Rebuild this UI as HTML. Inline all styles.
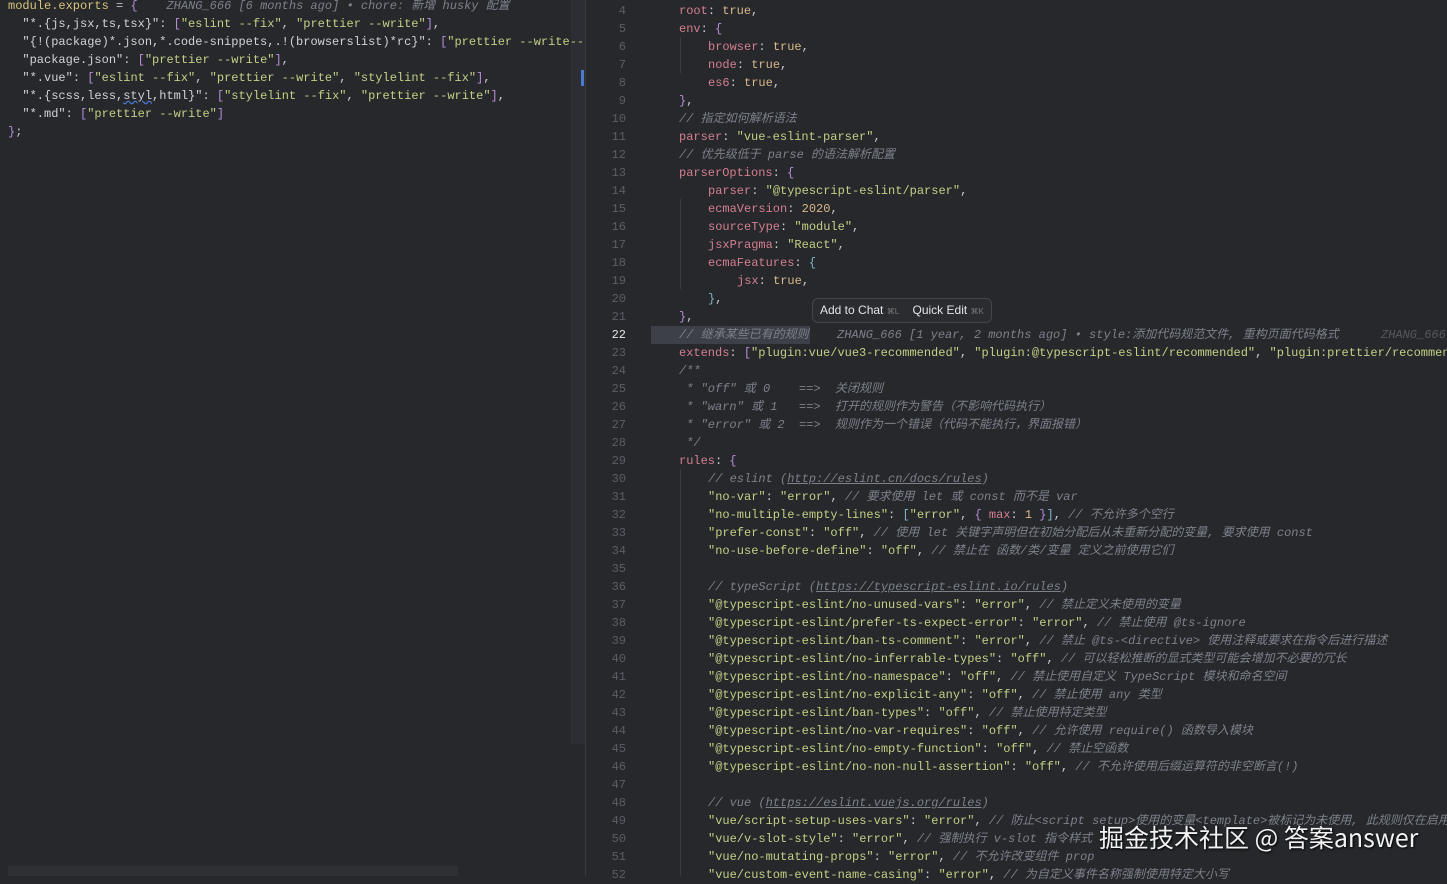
<!DOCTYPE html>
<html><head><meta charset="utf-8"><style>
*{margin:0;padding:0;box-sizing:border-box}
body{width:1447px;height:876px;overflow:hidden;background:#26282c;font-family:"Liberation Mono","Noto Sans CJK SC",monospace;font-size:12px;color:#c9ccd2;position:relative}
.l{position:absolute;white-space:pre;line-height:18px;height:18px}
.k{color:#d47f8f}.s{color:#c5cf85}.c{color:#7d818a;font-style:italic}.n{color:#d9b98a}.p{color:#bfc3ca}.b{color:#b68ed8}.y{color:#d7c37a}.w{color:#d0d3d8}.cy{color:#7fb6c4}
.num{position:absolute;left:590px;width:36px;text-align:right;color:#5b5e65;line-height:18px;font-size:12px}
.u{text-decoration:underline}
</style></head><body>
<div style="position:absolute;left:571px;top:0;width:14px;height:744px;background:#2c2e33"></div>
<div style="position:absolute;left:581px;top:70px;width:3px;height:16px;background:#4a7bd0"></div>
<div style="position:absolute;left:585px;top:0;width:1px;height:876px;background:#3a3c41"></div>
<div style="position:absolute;left:8px;top:866px;width:450px;height:10px;background:#2e3035"></div>
<div class="l" style="left:8px;top:-3px"><span class="y">module.exports</span> <span class="p">=</span> <span class="b">{</span>    <span class="c">ZHANG_666 [6 months ago] • chore: 新增 husky 配置</span></div>
<div class="l" style="left:8px;top:15px">  <span class="w">"*.{js,jsx,ts,tsx}"</span>: <span class="b">[</span><span class="s">"eslint --fix"</span>, <span class="s">"prettier --write"</span><span class="b">]</span>,</div>
<div class="l" style="left:8px;top:33px">  <span class="w">"{!(package)*.json,*.code-snippets,.!(browserslist)*rc}"</span>: <span class="b">[</span><span class="s">"prettier --write--</span></div>
<div class="l" style="left:8px;top:51px">  <span class="w">"package.json"</span>: <span class="b">[</span><span class="s">"prettier --write"</span><span class="b">]</span>,</div>
<div class="l" style="left:8px;top:69px">  <span class="w">"*.vue"</span>: <span class="b">[</span><span class="s">"eslint --fix"</span>, <span class="s">"prettier --write"</span>, <span class="s">"stylelint --fix"</span><span class="b">]</span>,</div>
<div class="l" style="left:8px;top:87px">  <span class="w">"*.{scss,less,<span style="text-decoration:underline wavy #4a7bd0">styl</span>,html}"</span>: <span class="b">[</span><span class="s">"stylelint --fix"</span>, <span class="s">"prettier --write"</span><span class="b">]</span>,</div>
<div class="l" style="left:8px;top:105px">  <span class="w">"*.md"</span>: <span class="b">[</span><span class="s">"prettier --write"</span><span class="b">]</span></div>
<div class="l" style="left:8px;top:123px"><span class="b">}</span>;</div>

<div style="position:absolute;left:651px;top:326px;width:159px;height:18px;background:#3d4048"></div>
<div style="position:absolute;left:680px;top:37px;width:1px;height:36px;background:#3a3c42"></div>
<div style="position:absolute;left:680px;top:469px;width:1px;height:407px;background:#3a3c42"></div>
<div style="position:absolute;left:680px;top:199px;width:1px;height:90px;background:#3a3c42"></div>

<div class="num" style="top:2px">4<br>5<br>6<br>7<br>8<br>9<br>10<br>11<br>12<br>13<br>14<br>15<br>16<br>17<br>18<br>19<br>20<br>21<br><span style="color:#e6e6e6">22</span><br>23<br>24<br>25<br>26<br>27<br>28<br>29<br>30<br>31<br>32<br>33<br>34<br>35<br>36<br>37<br>38<br>39<br>40<br>41<br>42<br>43<br>44<br>45<br>46<br>47<br>48<br>49<br>50<br>51<br>52</div>

<div class="l" style="left:679px;top:2px"><span class="k">root</span>: <span class="n">true</span>,</div>
<div class="l" style="left:679px;top:20px"><span class="k">env</span>: <span class="b">{</span></div>
<div class="l" style="left:708px;top:38px"><span class="k">browser</span>: <span class="n">true</span>,</div>
<div class="l" style="left:708px;top:56px"><span class="k">node</span>: <span class="n">true</span>,</div>
<div class="l" style="left:708px;top:74px"><span class="k">es6</span>: <span class="n">true</span>,</div>
<div class="l" style="left:679px;top:92px"><span class="b">}</span>,</div>
<div class="l" style="left:679px;top:110px"><span class="c">// 指定如何解析语法</span></div>
<div class="l" style="left:679px;top:128px"><span class="k">parser</span>: <span class="s">"vue-eslint-parser"</span>,</div>
<div class="l" style="left:679px;top:146px"><span class="c">// 优先级低于 parse 的语法解析配置</span></div>
<div class="l" style="left:679px;top:164px"><span class="k">parserOptions</span>: <span class="b">{</span></div>
<div class="l" style="left:708px;top:182px"><span class="k">parser</span>: <span class="s">"@typescript-eslint/parser"</span>,</div>
<div class="l" style="left:708px;top:200px"><span class="k">ecmaVersion</span>: <span class="n">2020</span>,</div>
<div class="l" style="left:708px;top:218px"><span class="k">sourceType</span>: <span class="s">"module"</span>,</div>
<div class="l" style="left:708px;top:236px"><span class="k">jsxPragma</span>: <span class="s">"React"</span>,</div>
<div class="l" style="left:708px;top:254px"><span class="k">ecmaFeatures</span>: <span class="cy">{</span></div>
<div class="l" style="left:737px;top:272px"><span class="k">jsx</span>: <span class="n">true</span>,</div>
<div class="l" style="left:708px;top:290px"><span class="cy">}</span>,</div>
<div class="l" style="left:679px;top:308px"><span class="b">}</span>,</div>
<div style="position:absolute;left:812px;top:298px;width:180px;height:25px;background:#2a2c30;border:1px solid #43464c;border-radius:6px;font-family:'Liberation Sans',sans-serif;font-size:12px;color:#e2e4e8;line-height:23px;padding-left:7px;white-space:pre">Add to Chat <span style="font-size:8px;color:#777">⌘L</span>    Quick Edit <span style="font-size:8px;color:#777">⌘K</span></div>
<div class="l" style="left:679px;top:326px"><span class="c">// 继承某些已有的规则</span></div>
<div class="l" style="left:837px;top:326px"><span class="c">ZHANG_666 [1 year, 2 months ago] • style:添加代码规范文件, 重构页面代码格式</span></div>
<div class="l" style="left:1381px;top:326px"><span class="c" style="color:#55585e">ZHANG_666</span></div>
<div class="l" style="left:679px;top:344px"><span class="k">extends</span>: <span class="b">[</span><span class="s">"plugin:vue/vue3-recommended"</span>, <span class="s">"plugin:@typescript-eslint/recommended"</span>, <span class="s">"plugin:prettier/recommended"</span></div>
<div class="l" style="left:679px;top:362px"><span class="c">/**</span></div>
<div class="l" style="left:679px;top:380px"><span class="c"> * "off" 或 0    ==>  关闭规则</span></div>
<div class="l" style="left:679px;top:398px"><span class="c"> * "warn" 或 1   ==>  打开的规则作为警告（不影响代码执行）</span></div>
<div class="l" style="left:679px;top:416px"><span class="c"> * "error" 或 2  ==>  规则作为一个错误（代码不能执行，界面报错）</span></div>
<div class="l" style="left:679px;top:434px"><span class="c"> */</span></div>
<div class="l" style="left:679px;top:452px"><span class="k">rules</span>: <span class="b">{</span></div>
<div class="l" style="left:708px;top:470px"><span class="c">// eslint (<span class="u">http://eslint.cn/docs/rules</span>)</span></div>
<div class="l" style="left:708px;top:488px"><span class="s">"no-var"</span>: <span class="s">"error"</span>, <span class="c">// 要求使用 let 或 const 而不是 var</span></div>
<div class="l" style="left:708px;top:506px"><span class="s">"no-multiple-empty-lines"</span>: <span class="cy">[</span><span class="s">"error"</span>, <span class="b">{</span> <span class="k">max</span>: <span class="n">1</span> <span class="b">}</span><span class="cy">]</span>, <span class="c">// 不允许多个空行</span></div>
<div class="l" style="left:708px;top:524px"><span class="s">"prefer-const"</span>: <span class="s">"off"</span>, <span class="c">// 使用 let 关键字声明但在初始分配后从未重新分配的变量, 要求使用 const</span></div>
<div class="l" style="left:708px;top:542px"><span class="s">"no-use-before-define"</span>: <span class="s">"off"</span>, <span class="c">// 禁止在 函数/类/变量 定义之前使用它们</span></div>
<div class="l" style="left:708px;top:578px"><span class="c">// typeScript (<span class="u">https://typescript-eslint.io/rules</span>)</span></div>
<div class="l" style="left:708px;top:596px"><span class="s">"@typescript-eslint/no-unused-vars"</span>: <span class="s">"error"</span>, <span class="c">// 禁止定义未使用的变量</span></div>
<div class="l" style="left:708px;top:614px"><span class="s">"@typescript-eslint/prefer-ts-expect-error"</span>: <span class="s">"error"</span>, <span class="c">// 禁止使用 @ts-ignore</span></div>
<div class="l" style="left:708px;top:632px"><span class="s">"@typescript-eslint/ban-ts-comment"</span>: <span class="s">"error"</span>, <span class="c">// 禁止 @ts-&lt;directive&gt; 使用注释或要求在指令后进行描述</span></div>
<div class="l" style="left:708px;top:650px"><span class="s">"@typescript-eslint/no-inferrable-types"</span>: <span class="s">"off"</span>, <span class="c">// 可以轻松推断的显式类型可能会增加不必要的冗长</span></div>
<div class="l" style="left:708px;top:668px"><span class="s">"@typescript-eslint/no-namespace"</span>: <span class="s">"off"</span>, <span class="c">// 禁止使用自定义 TypeScript 模块和命名空间</span></div>
<div class="l" style="left:708px;top:686px"><span class="s">"@typescript-eslint/no-explicit-any"</span>: <span class="s">"off"</span>, <span class="c">// 禁止使用 any 类型</span></div>
<div class="l" style="left:708px;top:704px"><span class="s">"@typescript-eslint/ban-types"</span>: <span class="s">"off"</span>, <span class="c">// 禁止使用特定类型</span></div>
<div class="l" style="left:708px;top:722px"><span class="s">"@typescript-eslint/no-var-requires"</span>: <span class="s">"off"</span>, <span class="c">// 允许使用 require() 函数导入模块</span></div>
<div class="l" style="left:708px;top:740px"><span class="s">"@typescript-eslint/no-empty-function"</span>: <span class="s">"off"</span>, <span class="c">// 禁止空函数</span></div>
<div class="l" style="left:708px;top:758px"><span class="s">"@typescript-eslint/no-non-null-assertion"</span>: <span class="s">"off"</span>, <span class="c">// 不允许使用后缀运算符的非空断言(!)</span></div>
<div class="l" style="left:708px;top:794px"><span class="c">// vue (<span class="u">https://eslint.vuejs.org/rules</span>)</span></div>
<div class="l" style="left:708px;top:812px"><span class="s">"vue/script-setup-uses-vars"</span>: <span class="s">"error"</span>, <span class="c">// 防止&lt;script setup&gt;使用的变量&lt;template&gt;被标记为未使用, 此规则仅在启用</span></div>
<div class="l" style="left:708px;top:830px"><span class="s">"vue/v-slot-style"</span>: <span class="s">"error"</span>, <span class="c">// 强制执行 v-slot 指令样式</span></div>
<div class="l" style="left:708px;top:848px"><span class="s">"vue/no-mutating-props"</span>: <span class="s">"error"</span>, <span class="c">// 不允许改变组件 prop</span></div>
<div class="l" style="left:708px;top:866px"><span class="s">"vue/custom-event-name-casing"</span>: <span class="s">"error"</span>, <span class="c">// 为自定义事件名称强制使用特定大小写</span></div>

<div style="position:absolute;left:1099px;top:820px;font-family:'Noto Sans CJK SC',sans-serif;font-size:25px;line-height:34px;color:#f2f2f2;text-shadow:1px 1px 2px #000;white-space:nowrap">掘金技术社区 @ 答案answer</div>
</body></html>
